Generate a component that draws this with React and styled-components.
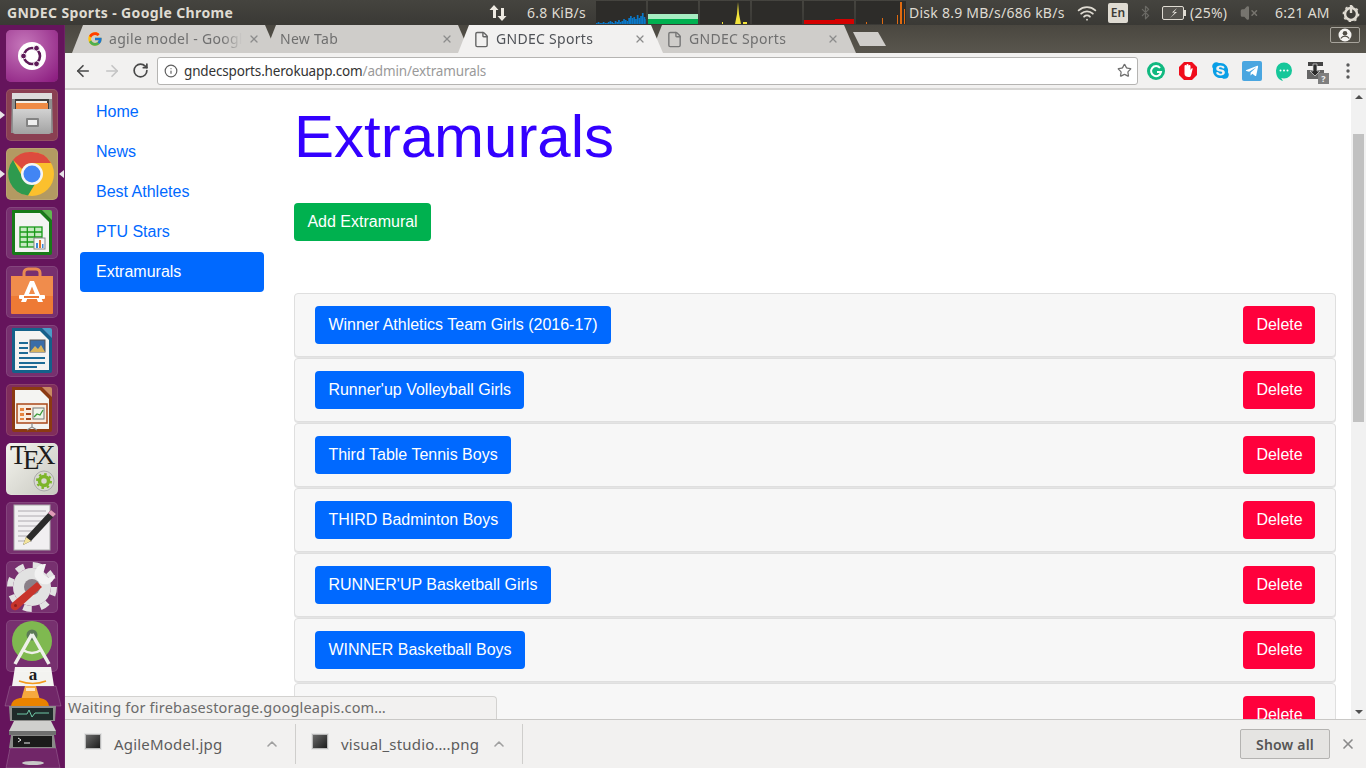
import styled, { createGlobalStyle } from "styled-components";
import {
  ArrowLeft,
  ArrowRight,
  RotateCw,
  Info,
  Star,
  File,
  Wifi,
  Bluetooth,
  VolumeX,
  X,
  ChevronUp,
} from "lucide-react";
import { FcGoogle } from "react-icons/fc";
import { FaSkype, FaTelegramPlane } from "react-icons/fa";

const GlobalStyle = createGlobalStyle`
  html, body {
    margin: 0;
    padding: 0;
    overflow: hidden;
    background: #fff;
  }
  * {
    box-sizing: border-box;
  }
`;

const UI_FONT = `"Noto Sans", "Open Sans", sans-serif`;
const PAGE_FONT = `"Liberation Sans", Arial, sans-serif`;

const Screen = styled.div`
  width: 1366px;
  height: 768px;
  display: flex;
  flex-direction: column;
  overflow: hidden;
`;

/* ---------- ubuntu panel ---------- */

const TopBar = styled.div`
  height: 25px;
  flex: none;
  display: flex;
  align-items: center;
  background: linear-gradient(#45443f, #3a3935);
  color: #dfdbd2;
  font-family: ${UI_FONT};
  font-size: 14px;
  letter-spacing: 0.25px;
  white-space: nowrap;
`;

const WindowTitle = styled.div`
  font-weight: 700;
  font-size: 14px;
  margin-left: 7px;
  width: 482px;
  letter-spacing: 0.36px;
`;

const TrayItem = styled.div`
  display: flex;
  align-items: center;
  width: ${(p) => p.$w}px;
  flex: none;
`;

const LangBox = styled.div`
  width: 20px;
  height: 20px;
  background: #dfdbd2;
  color: #3c3b37;
  border-radius: 2px;
  font-size: 12px;
  font-weight: 600;
  letter-spacing: 0;
  display: flex;
  align-items: center;
  justify-content: center;
`;

const Graphs = styled.div`
  display: flex;
  gap: 2px;
  width: 310px;
  flex: none;
`;

const Body = styled.div`
  flex: 1;
  min-height: 0;
  display: flex;
`;

/* ---------- launcher ---------- */

const Launcher = styled.div`
  width: 65px;
  flex: none;
  background: #65145c;
  display: flex;
  flex-direction: column;
  align-items: center;
  padding-top: 5px;
  gap: 7px;
  border-right: 1px solid #6d2365;
  overflow: hidden;
`;

const Tile = styled.div`
  width: 52px;
  height: 52px;
  flex: none;
  border-radius: 5px;
  background: ${(p) => p.$bg || "rgba(255,255,255,0.12)"};
  box-shadow: inset 0 0 0 1px rgba(255, 255, 255, 0.1);
  display: flex;
  align-items: center;
  justify-content: center;
  position: relative;
`;

const Pip = styled.span`
  position: absolute;
  top: 50%;
  margin-top: -4px;
  width: 0;
  height: 0;
  border-top: 4px solid transparent;
  border-bottom: 4px solid transparent;
  ${(p) =>
    p.$side === "left"
      ? "left: -6px; border-left: 5px solid #e8e4e8;"
      : "right: -6px; border-right: 5px solid #e8e4e8;"}
`;

/* ---------- chrome ---------- */

const Chrome = styled.div`
  flex: 1;
  min-width: 0;
  display: flex;
  flex-direction: column;
`;

const TabStrip = styled.div`
  height: 28px;
  flex: none;
  display: flex;
  padding-left: 7px;
  background: linear-gradient(#4a4740, #59564e);
  position: relative;
`;

const Tab = styled.div`
  width: 205px;
  height: 28px;
  flex: none;
  margin-right: -12px;
  padding-left: 15px;
  position: relative;
  z-index: ${(p) => p.$z};
  display: flex;
  align-items: center;
  gap: 6px;
  background: ${(p) => (p.$active ? "#f2f1f0" : "#cfcdca")};
  color: ${(p) => (p.$active ? "#4f5257" : "#6f6f6f")};
  clip-path: polygon(11px 0, calc(100% - 12px) 0, 100% 100%, 0 100%);
  font-family: ${UI_FONT};
  font-size: 14px;
  letter-spacing: 0.3px;
  white-space: nowrap;
`;

const TabTitle = styled.span`
  flex: 1;
  min-width: 0;
  margin-top: -2px;
  overflow: hidden;
  -webkit-mask-image: linear-gradient(to right, #000 85%, transparent);
  mask-image: linear-gradient(to right, #000 85%, transparent);
`;

const TabClose = styled.span`
  display: flex;
  margin-right: 17px;
  color: #8c8c8c;
`;

const NewTab = styled.div`
  width: 33px;
  height: 14px;
  margin: 7px 0 0 9px;
  flex: none;
  background: #cfcdca;
  clip-path: polygon(0 0, 25px 0, 100% 100%, 7px 100%);
`;

const ProfileButton = styled.div`
  position: absolute;
  right: 6px;
  top: 2px;
  width: 30px;
  height: 16px;
  border: 1px solid #a7a49c;
  border-radius: 2px;
  display: flex;
  align-items: center;
  justify-content: center;
`;

const Toolbar = styled.div`
  height: 37px;
  flex: none;
  background: #f2f1f0;
  border-bottom: 2px solid #d6d5d3;
  display: flex;
  align-items: center;
  padding-left: 9px;
  color: #484848;
`;

const NavIcons = styled.div`
  width: 83px;
  flex: none;
  display: flex;
  align-items: center;
  gap: 11px;
`;

const Omnibox = styled.div`
  width: 981px;
  height: 28px;
  flex: none;
  background: #fff;
  border: 1px solid #b5b4b2;
  border-radius: 3px;
  display: flex;
  align-items: center;
  padding: 0 5px 0 6px;
  font-family: ${UI_FONT};
  font-size: 13.5px;
  color: #333;
  white-space: nowrap;
`;

const Url = styled.span`
  flex: 1;
  margin-left: 6px;
  letter-spacing: -0.16px;
`;

const UrlPath = styled.span`
  color: #9a9a9a;
`;

const Extensions = styled.div`
  display: flex;
  align-items: center;
  margin-left: 8px;
  gap: 12px;
`;

const Ext = styled.div`
  width: 20px;
  height: 20px;
  display: flex;
  align-items: center;
  justify-content: center;
  position: relative;
`;

const ExtBadge = styled.span`
  position: absolute;
  right: -3px;
  bottom: -3px;
  width: 11px;
  height: 11px;
  background: #7f7f7f;
  color: #eee;
  font-family: ${UI_FONT};
  font-size: 9px;
  font-weight: 700;
  line-height: 11px;
  text-align: center;
`;

const Viewport = styled.div`
  flex: 1;
  min-height: 0;
  display: flex;
  position: relative;
  background: #fff;
  font-family: ${PAGE_FONT};
  font-size: 16px;
`;

const Sidebar = styled.nav`
  width: 229px;
  flex: none;
  padding: 2px 30px 0 15px;
  display: flex;
  flex-direction: column;
`;

const NavLink = styled.a`
  height: 40px;
  padding: 8px 16px;
  line-height: 24px;
  border-radius: 4px;
  color: ${(p) => (p.$active ? "#fff" : "#0069ff")};
  background: ${(p) => (p.$active ? "#0069ff" : "transparent")};
`;

const Main = styled.main`
  flex: 1;
  min-width: 0;
  overflow: hidden;
  padding: 11px 15px 0 0;
`;

const Title = styled.h1`
  margin: 0 0 30px;
  font-weight: 400;
  font-size: 60px;
  line-height: 72px;
  color: #3300ff;
`;

const Button = styled.button`
  height: 38px;
  padding: 0 13.4px;
  border: none;
  border-radius: 4px;
  font-family: ${PAGE_FONT};
  font-size: 16px;
  line-height: 24px;
  color: #fff;
  flex: none;
  background: ${(p) => p.$color};
  width: ${(p) => (p.$w ? `${p.$w}px` : "auto")};
`;

const List = styled.div`
  margin-top: 52px;
  display: flex;
  flex-direction: column;
  gap: 1px;
`;

const Row = styled.div`
  flex: none;
  height: 64px;
  display: flex;
  align-items: center;
  justify-content: space-between;
  padding: 0 20px;
  background: #f7f7f7;
  border: 1px solid #dfdfdf;
  border-radius: 4px;
  box-shadow: 0 1px 0 #e4e4e4;
`;

const Scrollbar = styled.div`
  width: 15px;
  flex: none;
  background: #f1f1f1;
  display: flex;
  flex-direction: column;
  align-items: center;
  position: relative;
`;

const ScrollThumb = styled.div`
  width: 11px;
  height: 288px;
  margin-top: 44px;
  background: #c1c1c1;
`;

const ScrollArrow = styled.span`
  position: absolute;
  ${(p) => (p.$down ? "bottom: 5px;" : "top: 5px;")}
  width: 0;
  height: 0;
  border-left: 4px solid transparent;
  border-right: 4px solid transparent;
  ${(p) =>
    p.$down ? "border-top: 4px solid #505050;" : "border-bottom: 4px solid #505050;"}
`;

const StatusBubble = styled.div`
  position: absolute;
  left: 0;
  bottom: 0;
  width: 432px;
  height: 23px;
  padding: 0 3px;
  background: #f2f1f0;
  border: 1px solid #d3d2d0;
  border-left: none;
  border-bottom: none;
  border-top-right-radius: 4px;
  color: #6b6b6b;
  font-family: ${UI_FONT};
  font-size: 14.5px;
  letter-spacing: 0.2px;
  line-height: 21px;
  white-space: nowrap;
`;

const DownloadBar = styled.div`
  height: 49px;
  flex: none;
  display: flex;
  align-items: center;
  background: #f2f1f0;
  border-top: 1px solid #c9c8c6;
  font-family: ${UI_FONT};
  font-size: 15px;
  letter-spacing: 0.2px;
  color: #5c5c5c;
`;

const DownloadItem = styled.div`
  width: ${(p) => p.$w}px;
  height: 40px;
  flex: none;
  display: flex;
  align-items: center;
  padding-left: ${(p) => p.$pad}px;
  border-right: 1px solid #cfcecc;
`;

const DownloadIcon = styled.span`
  width: 16px;
  height: 15px;
  flex: none;
  margin: -6px 13px 0 0;
  border: 1px solid #b9b9b9;
  outline: 1px solid #e4e4e4;
  background: linear-gradient(135deg, #6a6a6a, #1c1c1c);
`;

const DownloadName = styled.span`
  flex: 1;
  white-space: nowrap;
`;

const DownloadChevron = styled.span`
  display: flex;
  color: #a0a0a0;
  margin-right: 15px;
`;

const ShowAll = styled.button`
  margin-left: auto;
  width: 90px;
  height: 30px;
  border: 1px solid #b4b3b1;
  border-radius: 2px;
  background: #e5e4e2;
  color: #555;
  font-family: ${UI_FONT};
  font-size: 14px;
  font-weight: 600;
  letter-spacing: 0.2px;
`;

const CloseBar = styled.span`
  display: flex;
  margin: 0 10px;
  color: #8a8a8a;
`;

/* ---------- drawings ---------- */

const UpDownArrows = () => (
  <svg width="18" height="18" viewBox="0 0 18 18" fill="#eeeae2">
    <path d="M5 1l4.500 5H7v8H4V6H.5zM13 17l4.500-5H15V4h-3v8H8.500z" />
  </svg>
);

const Graph = ({ children }) => (
  <svg width="50" height="23" viewBox="0 0 50 23" style={{ background: "#2d2c29" }}>
    {children}
  </svg>
);

const netBars = [1, 2, 1, 1, 2, 1, 1, 2, 3, 2, 1, 3, 2, 4, 2, 3, 5, 4, 3, 6, 8, 6, 7, 5, 9, 6, 8, 11, 7, 5];

const NetGraph = () => (
  <Graph>
    {netBars.map((h, i) => (
      <rect key={i} x={i * 1.7} y={23 - h} width="1.7" height={h} fill="#0a78c8" />
    ))}
  </Graph>
);

const BatteryIcon = () => (
  <svg width="24" height="14" viewBox="0 0 24 14">
    <rect x="0.5" y="0.5" width="21" height="13" rx="1.5" fill="#55534e" stroke="#dfdbd2" />
    <rect x="22" y="4" width="2" height="6" fill="#dfdbd2" />
    <path d="M15 2l-5 4.500h3L8 12l7-6h-3z" fill="#f2efe8" />
  </svg>
);

const PowerGear = () => (
  <svg width="18" height="18" viewBox="0 0 18 18" fill="none" stroke="#dfdbd2">
    <circle cx="9" cy="10" r="6" strokeWidth="2.5" />
    <circle cx="9" cy="10" r="7.6" strokeWidth="1.6" strokeDasharray="2.4 3.5" />
    <path d="M9 1v8" strokeWidth="2.4" />
  </svg>
);

const ProfileIcon = () => (
  <svg width="14" height="14" viewBox="0 0 14 14">
    <circle cx="7" cy="7" r="6.500" fill="#f4f3f1" />
    <circle cx="7" cy="5.200" r="2.300" fill="#4f4c45" />
    <path d="M2.800 10.500c1-1.600 2.600-2.300 4.200-2.300s3.200.7 4.200 2.300" fill="none" stroke="#4f4c45" strokeWidth="1.200" />
  </svg>
);

const UbuntuLogo = () => (
  <svg width="52" height="52" viewBox="0 0 52 52">
    <defs>
      <radialGradient id="ubuBg" cx="0.35" cy="0.3" r="0.9">
        <stop offset="0" stopColor="#c678bb" />
        <stop offset="1" stopColor="#8c1d80" />
      </radialGradient>
    </defs>
    <rect width="52" height="52" rx="5" fill="url(#ubuBg)" />
    <circle cx="26" cy="26" r="14" fill="#fff" />
    <circle cx="26" cy="26" r="8" fill="none" stroke="#5e1a58" strokeWidth="2.6" />
    <circle cx="17.5" cy="26" r="2.9" fill="#5e1a58" stroke="#fff" />
    <circle cx="30.5" cy="18.2" r="2.9" fill="#5e1a58" stroke="#fff" />
    <circle cx="30.5" cy="33.8" r="2.9" fill="#5e1a58" stroke="#fff" />
  </svg>
);

const FilesIcon = () => (
  <svg width="52" height="52" viewBox="0 0 52 52">
    <defs>
      <linearGradient id="drawer" x1="0" y1="0" x2="0" y2="1">
        <stop offset="0" stopColor="#d2d2d2" />
        <stop offset="1" stopColor="#a2a2a2" />
      </linearGradient>
    </defs>
    <path d="M6 4h40l1 40H5z" fill="#8f8f8f" />
    <rect x="6" y="4" width="40" height="6" fill="#dcdcdc" />
    <rect x="9" y="10" width="34" height="10" fill="#3f3f3f" />
    <rect x="10" y="12" width="31" height="3" fill="#f4f0e8" />
    <rect x="10" y="14" width="32" height="6" fill="#ef8b45" />
    <path d="M7 20h38v23a2 2 0 0 1-2 2H9a2 2 0 0 1-2-2z" fill="url(#drawer)" />
    <rect x="20" y="29" width="13" height="9" rx="1" fill="#838383" />
    <rect x="22" y="31" width="9" height="5" fill="#efefef" />
  </svg>
);

const ChromeIcon = () => (
  <svg width="52" height="52" viewBox="0 0 52 52">
    <circle cx="26" cy="26" r="22" fill="#fbc02d" />
    <path d="M26 4a22 22 0 0 1 19 11H26a11 11 0 0 0-10 6L7 12A22 22 0 0 1 26 4z" fill="#dd4b3e" />
    <path d="M7 12l10 18a11 11 0 0 0 12 6l-7 11.600A22 22 0 0 1 7 12z" fill="#2e9a4e" />
    <circle cx="26" cy="26" r="11" fill="#f5f5f5" />
    <circle cx="26" cy="26" r="8.500" fill="#4285f4" />
  </svg>
);

const OfficeDoc = ({ edge, corner, children }) => (
  <svg width="52" height="52" viewBox="0 0 52 52">
    <path d="M6 3h30l10 10v33a2 2 0 0 1-2 2H8a2 2 0 0 1-2-2z" fill={edge} />
    <path d="M9 6h25l9 9v30H9z" fill="#f4f4f2" />
    <path d="M36 3h8a2 2 0 0 1 2 2v8z" fill={corner} />
    {children}
  </svg>
);

const CalcIcon = () => (
  <OfficeDoc edge="#187a18" corner="#5fb84f">
    <g fill="none" stroke="#1a9a1a" strokeWidth="1.300">
      <rect x="14" y="20" width="22" height="20" fill="#c7eac3" />
      <path d="M14 25h22M14 30h22M14 35h22M21.300 20v20M28.600 20v20" />
    </g>
    <rect x="28" y="31" width="11" height="11" fill="#f7f7f7" stroke="#888" />
    <rect x="30" y="36" width="2" height="5" fill="#3a88d8" />
    <rect x="33" y="33" width="2" height="8" fill="#e0762a" />
    <rect x="36" y="37" width="1.500" height="4" fill="#3a88d8" />
  </OfficeDoc>
);

const WriterIcon = () => (
  <OfficeDoc edge="#14618a" corner="#4a9cc7">
    <g fill="#1d6b96">
      <rect x="13" y="17" width="9" height="2" />
      <rect x="13" y="22" width="9" height="2" />
      <rect x="13" y="27" width="9" height="2" />
      <rect x="13" y="32" width="26" height="2" />
      <rect x="13" y="37" width="26" height="2" />
      <rect x="13" y="41" width="18" height="2" />
    </g>
    <rect x="24" y="15" width="15" height="12" fill="#3a6da8" stroke="#555" />
    <path d="M24 27l5-6 3 3 3-4 4 7z" fill="#d9b45c" />
  </OfficeDoc>
);

const ImpressIcon = () => (
  <OfficeDoc edge="#8b3a12" corner="#c98a62">
    <rect x="11" y="20" width="30" height="19" fill="#f9ecdf" stroke="#a9471a" strokeWidth="1.500" />
    <g fill="#a9471a">
      <rect x="14" y="24" width="4" height="3" fill="#e6843f" />
      <rect x="20" y="24" width="5" height="2" />
      <rect x="14" y="29" width="4" height="3" fill="#e6843f" />
      <rect x="20" y="29" width="5" height="2" />
      <rect x="14" y="34" width="4" height="2" fill="#e6843f" />
      <rect x="20" y="34" width="5" height="2" />
    </g>
    <rect x="27" y="24" width="11" height="11" fill="#eef4ea" stroke="#777" />
    <path d="M28 33l3-3 3 1 3-5" fill="none" stroke="#3a9a3a" strokeWidth="1.300" />
    <path d="M26 39v4l-5 3M26 43l5 3" fill="none" stroke="#8a8a8a" strokeWidth="1.200" />
  </OfficeDoc>
);

const BagIcon = () => (
  <svg width="52" height="52" viewBox="0 0 52 52">
    <path d="M18 14V7a4 4 0 0 1 4-4h8a4 4 0 0 1 4 4v7" fill="none" stroke="#e88a52" strokeWidth="3" />
    <path d="M5 10h42v37a1 1 0 0 1-1 1H6a1 1 0 0 1-1-1z" fill="#ee7a35" />
    <path d="M5 10h42v20H5z" fill="#f08c4c" />
    <path d="M24 15h4l9 21h-5l-2-5h-8l-2 5h-5z" fill="#fff" />
    <path d="M26 20.500l3 7.500h-6z" fill="#f08c4c" />
    <rect x="13" y="29" width="26" height="4" rx="1" fill="#fff" />
    <rect x="18" y="30" width="15" height="2" fill="#ee7a35" />
  </svg>
);

const TexMark = styled.span`
  position: absolute;
  left: 4px;
  top: -4px;
  font-family: "Liberation Serif", serif;
  font-size: 27px;
  line-height: 32px;
  letter-spacing: -3.5px;
  color: #1c1c1c;
`;

const TexE = styled.span`
  position: relative;
  top: 5px;
`;

const TexGear = () => (
  <svg width="52" height="52" viewBox="0 0 52 52" style={{ position: "absolute", left: 0, top: 0 }}>
    <circle cx="38" cy="38" r="10" fill="#d8d8d0" stroke="#aaa" />
    <circle cx="38" cy="38" r="4.500" fill="none" stroke="#7db52a" strokeWidth="3.500" />
    <circle cx="38" cy="38" r="7" fill="none" stroke="#7db52a" strokeWidth="2" strokeDasharray="2.500 3" />
  </svg>
);

const EditorIcon = () => (
  <svg width="52" height="52" viewBox="0 0 52 52">
    <rect x="8" y="3" width="36" height="45" fill="#f1eff1" stroke="#aaa" />
    <g stroke="#aeaab0" strokeWidth="1">
      <path d="M12 9h28M12 14h28M12 19h28M12 24h22M12 29h16M12 34h12M12 39h14" />
    </g>
    <path d="M45 8l5 4-25 27-8 4 3-8z" fill="#2b2b2b" />
    <path d="M45 8l5 4-3 3-5-4z" fill="#e09ab8" />
    <path d="M17 43l3-8 5 4z" fill="#f3e39c" />
  </svg>
);

const SettingsIcon = () => (
  <svg width="52" height="52" viewBox="0 0 52 52">
    <circle cx="26" cy="26" r="19" fill="#e2e2e2" />
    <circle cx="26" cy="26" r="22" fill="none" stroke="#e2e2e2" strokeWidth="6" strokeDasharray="8.500 8.800" />
    <circle cx="26" cy="26" r="8" fill="#8a8088" />
    <path d="M6 42l25-21 5 5-24 22a4 4 0 0 1-6-6z" fill="#c8342c" />
    <circle cx="9.500" cy="44.500" r="1.500" fill="#8e1f1a" />
    <path d="M39 3a10 10 0 0 0-10 13l5 6a10 10 0 0 0 15-8l-7 3-5-4 3-10z" fill="#f2f2f2" />
  </svg>
);

const AndroidIcon = () => (
  <svg width="52" height="52" viewBox="0 0 52 52">
    <circle cx="26" cy="21" r="20" fill="#7fb950" />
    <circle cx="26" cy="15" r="5.500" fill="#5c7a56" />
    <path d="M26 14L9 44M26 14l17 30" stroke="#eef0ea" strokeWidth="3.500" fill="none" />
    <path d="M17 30q9 6 18 0" stroke="#eef0ea" strokeWidth="2.500" fill="none" />
  </svg>
);

const StackedApps = () => (
  <svg width="65" height="101" viewBox="0 0 65 101" style={{ flex: "none", marginTop: -12 }}>
    <g fill="rgba(255,255,255,0.08)" stroke="rgba(255,255,255,0.18)">
      <path d="M10 19h46l5 20H5z" />
      <path d="M10 81h46l4 20H6z" />
    </g>
    <path d="M15 0h36l3 19H12z" fill="#f3f3f0" />
    <text x="33" y="13" textAnchor="middle" fontFamily="Liberation Serif, serif" fontWeight="700" fontSize="17" fill="#1b1b1b">a</text>
    <path d="M19 14q14 5 27 0" fill="none" stroke="#f29a1d" strokeWidth="1.500" />
    <path d="M25 19h11l4 14H21z" fill="#f7a93e" />
    <path d="M26 21h9v3h-9z" fill="#fff" opacity="0.7" />
    <path d="M11 39q1-7 9-8h20q8 1 9 8z" fill="#e98300" />
    <path d="M9 39h47l-1 15H10z" fill="#8d8d8b" />
    <rect x="12" y="41" width="41" height="12" fill="#1f2a2a" />
    <path d="M17 47h10l2-4 3 7 3-4h14" fill="none" stroke="#6fc7a7" strokeWidth="1" />
    <path d="M14 54h37l5 10H9z" fill="#cfcfcd" />
    <rect x="9" y="64" width="47" height="4" fill="#6f6f6f" />
    <path d="M11 68h43l2 13H9z" fill="#8a8a88" />
    <rect x="13" y="69" width="39" height="11" fill="#1b1b1b" />
    <path d="M18 71l3 2-3 2M24 76h6" fill="none" stroke="#eee" strokeWidth="1" />
    <ellipse cx="33" cy="96" rx="11" ry="2" fill="#c8c8c8" />
  </svg>
);

const GrammarlyIcon = () => (
  <svg width="20" height="20" viewBox="0 0 20 20">
    <circle cx="10" cy="10" r="9" fill="#11b980" />
    <path d="M14 7a5 5 0 1 0 1 4h-4" fill="none" stroke="#fff" strokeWidth="2" />
  </svg>
);

const AdblockIcon = () => (
  <svg width="20" height="20" viewBox="0 0 20 20">
    <path d="M6 1h8l5 5v8l-5 5H6l-5-5V6z" fill="#f00d1c" />
    <path d="M6.500 8V5a1 1 0 0 1 2 0V4a1 1 0 0 1 2 0v1a1 1 0 0 1 2 0v4l1-1.500c1-.5 1.500.3 1 1L13 14.500c-.4 1-1 1.500-2.500 1.500-2 0-4-1-4-3z" fill="#fff" />
  </svg>
);

const ChatIcon = () => (
  <svg width="20" height="20" viewBox="0 0 20 20">
    <path d="M10 1.500a8 8 0 0 1 0 16c-1 0-2-.2-2.800-.5L9 20c-4-1-7-4-7-10.500a8 8 0 0 1 8-8z" fill="#16c79a" />
    <circle cx="6.500" cy="9.500" r="1" fill="#fff" />
    <circle cx="10" cy="9.500" r="1" fill="#fff" />
    <circle cx="13.500" cy="9.500" r="1" fill="#fff" />
  </svg>
);

const DownloaderIcon = () => (
  <svg width="20" height="20" viewBox="0 0 20 20">
    <rect x="2" y="1" width="15" height="4" fill="#444" />
    <path d="M1 9h17v9H1z" fill="#666" />
    <path d="M7 3h4v7h3l-5 5-5-5h3z" fill="#2b2b2b" stroke="#ddd" strokeWidth="0.700" />
  </svg>
);

const MenuDots = () => (
  <svg width="4" height="16" viewBox="0 0 4 16" fill="#5a5a5a">
    <circle cx="2" cy="2" r="1.700" />
    <circle cx="2" cy="8" r="1.700" />
    <circle cx="2" cy="14" r="1.700" />
  </svg>
);

const navItems = ["Home", "News", "Best Athletes", "PTU Stars", "Extramurals"];

const extramurals = [
  "Winner Athletics Team Girls (2016-17)",
  "Runner'up Volleyball Girls",
  "Third Table Tennis Boys",
  "THIRD Badminton Boys",
  "RUNNER'UP Basketball Girls",
  "WINNER Basketball Boys",
];

const BLUE = "#0069ff";
const RED = "#ff003c";
const GREEN = "#00b14f";

const App = () => {
  return (
    <Screen>
      <GlobalStyle />
      <TopBar>
        <WindowTitle>GNDEC Sports - Google Chrome</WindowTitle>
        <TrayItem $w={38}>
          <UpDownArrows />
        </TrayItem>
        <TrayItem $w={69}>6.8 KiB/s</TrayItem>
        <Graphs>
          <NetGraph />
          <Graph>
            <rect y="13" width="50" height="5" fill="#a6edc2" />
            <rect y="18" width="50" height="5" fill="#00b050" />
          </Graph>
          <Graph>
            <path d="M35 23l2-10 1-12 1 12 2 10z" fill="#f2e33a" />
            <rect x="22" y="21" width="1" height="2" fill="#f2e33a" />
            <rect x="43" y="21" width="4" height="2" fill="#f2e33a" />
          </Graph>
          <Graph />
          <Graph>
            <rect y="19" width="31" height="4" fill="#d40000" />
            <rect x="31" y="18" width="19" height="5" fill="#d40000" />
          </Graph>
          <Graph>
            <rect x="10" y="21" width="1" height="2" fill="#e06a10" />
            <rect x="26" y="21" width="1" height="2" fill="#e06a10" />
            <rect x="26" y="17" width="1" height="6" fill="#e06a10" />
            <rect x="41" y="14" width="1" height="9" fill="#e06a10" />
            <rect x="44" y="1" width="2" height="22" fill="#e06a10" />
            <rect x="48" y="8" width="1" height="15" fill="#e06a10" />
          </Graph>
        </Graphs>
        <TrayItem $w={3} />
        <TrayItem $w={168}>Disk 8.9 MB/s/686 kB/s</TrayItem>
        <TrayItem $w={31}>
          <Wifi size={20} strokeWidth={2.2} />
        </TrayItem>
        <TrayItem $w={30}>
          <LangBox>En</LangBox>
        </TrayItem>
        <TrayItem $w={24}>
          <Bluetooth size={15} color="#6b6a65" />
        </TrayItem>
        <TrayItem $w={28}>
          <BatteryIcon />
        </TrayItem>
        <TrayItem $w={50}>(25%)</TrayItem>
        <TrayItem $w={35}>
          <VolumeX size={18} color="#77756f" fill="#77756f" />
        </TrayItem>
        <TrayItem $w={67}>6:21 AM</TrayItem>
        <TrayItem $w={18}>
          <PowerGear />
        </TrayItem>
      </TopBar>
      <Body>
        <Launcher>
          <Tile>
            <UbuntuLogo />
          </Tile>
          <Tile $bg="#8a3f52">
            <Pip $side="left" />
            <FilesIcon />
          </Tile>
          <Tile $bg="#b39a62">
            <Pip $side="left" />
            <Pip $side="right" />
            <ChromeIcon />
          </Tile>
          <Tile>
            <CalcIcon />
          </Tile>
          <Tile>
            <BagIcon />
          </Tile>
          <Tile>
            <WriterIcon />
          </Tile>
          <Tile $bg="rgba(255,160,90,0.18)">
            <ImpressIcon />
          </Tile>
          <Tile $bg="linear-gradient(135deg, #f4f4ee, #c8c8c0)">
            <TexMark>
              T<TexE>E</TexE>X
            </TexMark>
            <TexGear />
          </Tile>
          <Tile>
            <EditorIcon />
          </Tile>
          <Tile>
            <SettingsIcon />
          </Tile>
          <Tile>
            <AndroidIcon />
          </Tile>
          <StackedApps />
        </Launcher>
        <Chrome>
          <TabStrip>
            <Tab $z={2}>
              <FcGoogle size={16} style={{ flex: "none" }} />
              <TabTitle>agile model - Google</TabTitle>
              <TabClose>
                <X size={12} strokeWidth={2.5} />
              </TabClose>
            </Tab>
            <Tab $z={1}>
              <TabTitle>New Tab</TabTitle>
              <TabClose>
                <X size={12} strokeWidth={2.5} />
              </TabClose>
            </Tab>
            <Tab $z={3} $active>
              <File size={17} color="#666" style={{ flex: "none" }} />
              <TabTitle>GNDEC Sports</TabTitle>
              <TabClose>
                <X size={12} strokeWidth={2.5} />
              </TabClose>
            </Tab>
            <Tab $z={1}>
              <File size={17} color="#777" style={{ flex: "none" }} />
              <TabTitle>GNDEC Sports</TabTitle>
              <TabClose>
                <X size={12} strokeWidth={2.5} />
              </TabClose>
            </Tab>
            <NewTab />
            <ProfileButton>
              <ProfileIcon />
            </ProfileButton>
          </TabStrip>
          <Toolbar>
            <NavIcons>
              <ArrowLeft size={18} strokeWidth={2.2} />
              <ArrowRight size={18} strokeWidth={2.2} color="#c4c4c4" />
              <RotateCw size={17} strokeWidth={2.4} />
            </NavIcons>
            <Omnibox>
              <Info size={14} strokeWidth={2} color="#5f5f5f" />
              <Url>
                gndecsports.herokuapp.com<UrlPath>/admin/extramurals</UrlPath>
              </Url>
              <Star size={15} color="#6f6f6f" />
            </Omnibox>
            <Extensions>
              <Ext>
                <GrammarlyIcon />
              </Ext>
              <Ext>
                <AdblockIcon />
              </Ext>
              <Ext>
                <FaSkype size={19} color="#0a9fe6" />
              </Ext>
              <Ext>
                <FaTelegramPlane size={20} color="#fff" style={{ background: "#4aa6e0", padding: 3, borderRadius: 2 }} />
              </Ext>
              <Ext>
                <ChatIcon />
              </Ext>
              <Ext>
                <DownloaderIcon />
                <ExtBadge>?</ExtBadge>
              </Ext>
              <Ext>
                <MenuDots />
              </Ext>
            </Extensions>
          </Toolbar>
          <Viewport>
            <Sidebar>
              {navItems.map((item) => (
                <NavLink key={item} $active={item === "Extramurals"}>
                  {item}
                </NavLink>
              ))}
            </Sidebar>
            <Main>
              <Title>Extramurals</Title>
              <Button $color={GREEN}>Add Extramural</Button>
              <List>
                {extramurals.map((name) => (
                  <Row key={name}>
                    <Button $color={BLUE}>{name}</Button>
                    <Button $color={RED} $w={72}>
                      Delete
                    </Button>
                  </Row>
                ))}
                <Row>
                  <Button $color={BLUE} $w={172} />
                  <Button $color={RED} $w={72}>
                    Delete
                  </Button>
                </Row>
              </List>
            </Main>
            <Scrollbar>
              <ScrollArrow />
              <ScrollThumb />
              <ScrollArrow $down />
            </Scrollbar>
            <StatusBubble>Waiting for firebasestorage.googleapis.com…</StatusBubble>
          </Viewport>
          <DownloadBar>
            <DownloadItem $w={231} $pad={20}>
              <DownloadIcon />
              <DownloadName>AgileModel.jpg</DownloadName>
              <DownloadChevron>
                <ChevronUp size={16} strokeWidth={2.4} />
              </DownloadChevron>
            </DownloadItem>
            <DownloadItem $w={227} $pad={16}>
              <DownloadIcon />
              <DownloadName>visual_studio….png</DownloadName>
              <DownloadChevron>
                <ChevronUp size={16} strokeWidth={2.4} />
              </DownloadChevron>
            </DownloadItem>
            <ShowAll>Show all</ShowAll>
            <CloseBar>
              <X size={16} strokeWidth={2.5} />
            </CloseBar>
          </DownloadBar>
        </Chrome>
      </Body>
    </Screen>
  );
};

export default App;
